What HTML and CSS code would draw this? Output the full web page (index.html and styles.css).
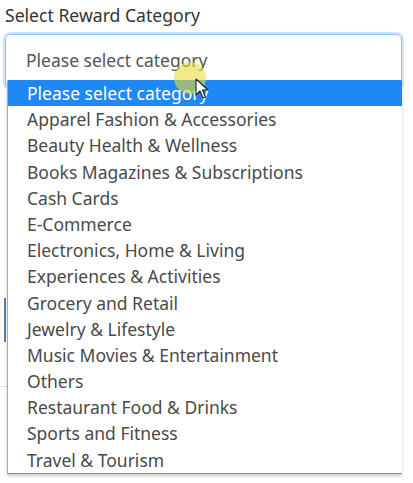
FILE: index.html
```html
<!DOCTYPE html>
<html>
<head>
<meta charset="utf-8">
<link rel="stylesheet" href="styles.css">
</head>
<body>
<div class="page">
  <div class="field">
    <label class="label">Select Reward Category</label>
    <div class="select">Please select category</div>
  </div>
  <div class="under">
    <div class="under-bar"></div>
    <div class="under-line"></div>
  </div>
  <ul class="dropdown">
    <li class="opt active">Please select category</li>
    <li class="opt">Apparel Fashion &amp; Accessories</li>
    <li class="opt">Beauty Health &amp; Wellness</li>
    <li class="opt">Books Magazines &amp; Subscriptions</li>
    <li class="opt">Cash Cards</li>
    <li class="opt">E-Commerce</li>
    <li class="opt">Electronics, Home &amp; Living</li>
    <li class="opt">Experiences &amp; Activities</li>
    <li class="opt">Grocery and Retail</li>
    <li class="opt">Jewelry &amp; Lifestyle</li>
    <li class="opt">Music Movies &amp; Entertainment</li>
    <li class="opt">Others</li>
    <li class="opt">Restaurant Food &amp; Drinks</li>
    <li class="opt">Sports and Fitness</li>
    <li class="opt">Travel &amp; Tourism</li>
  </ul>
  <div class="spot"></div>
  <svg class="cursor" width="14" height="22" viewBox="0 0 14 22">
    <path d="M1 1 L1 17 L5 13 L8 20 L10.5 19 L7.5 12 L13 12 Z" fill="#fff" stroke="#222" stroke-width="1.1" stroke-linejoin="round"/>
  </svg>
</div>
</body>
</html>
```
FILE: styles.css
```css
html, body {
  margin: 0;
  padding: 0;
  background: #fff;
}
.page {
  position: relative;
  width: 413px;
  height: 483px;
  overflow: hidden;
  font-family: "Noto Sans", "Open Sans", sans-serif;
  font-size: 17.5px;
}
.field {
  display: flex;
  flex-direction: column;
  padding: 3px 11px 0 5px;
  gap: 7px;
}
.label {
  display: block;
  color: #333;
  font-size: 17.6px;
  line-height: 24px;
  padding-left: 0;
}
.select {
  height: 54px;
  box-sizing: border-box;
  border: 1px solid #8ebdf2;
  border-radius: 5px;
  box-shadow: 0 0 0 2px rgba(150, 195, 245, 0.45);
  color: #555;
  font-size: 17.5px;
  line-height: 50px;
  padding-left: 20px;
}
.under {
  display: flex;
  flex-direction: column;
}
.under-bar {
  position: absolute;
  left: 4px;
  top: 298px;
  width: 2px;
  height: 44px;
  background: #5a7fb5;
}
.under-line {
  position: absolute;
  left: 0;
  top: 386px;
  width: 8px;
  height: 1px;
  background: #ddd;
}
.dropdown {
  position: absolute;
  left: 7px;
  top: 80px;
  width: 395px;
  margin: 0;
  padding: 0;
  list-style: none;
  background: #fff;
  border-left: 1px solid #aaa;
  border-bottom: 1px solid #8a8a8a;
  box-shadow: 0 2px 3px rgba(0, 0, 0, 0.2);
  box-sizing: border-box;
}
.opt {
  height: 26.2px;
  line-height: 26.2px;
  padding-left: 19px;
  color: #4a4a4a;
  font-size: 17.5px;
  white-space: nowrap;
}
.opt.active {
  background: #1e88f5;
  color: #fff;
}
.spot {
  position: absolute;
  left: 174px;
  top: 62px;
  width: 32px;
  height: 32px;
  border-radius: 50%;
  background: rgba(230, 220, 60, 0.6);
}
.cursor {
  position: absolute;
  left: 195px;
  top: 78px;
}
```
